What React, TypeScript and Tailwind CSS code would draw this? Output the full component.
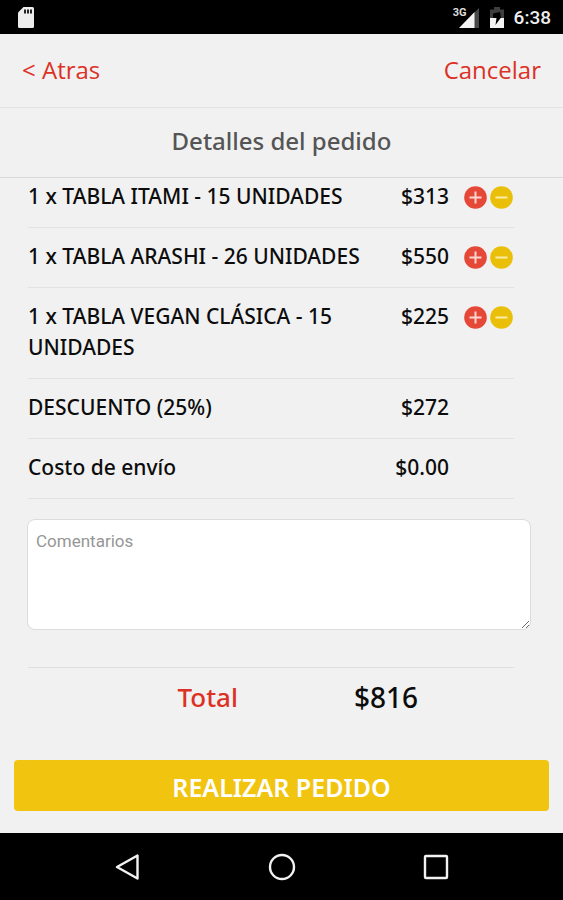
type OrderItem = {
  name: string;
  price: string;
  editable?: boolean;
};

const items: OrderItem[] = [
  { name: '1 x TABLA ITAMI - 15 UNIDADES', price: '$313', editable: true },
  { name: '1 x TABLA ARASHI - 26 UNIDADES', price: '$550', editable: true },
  { name: '1 x TABLA VEGAN CLÁSICA - 15 UNIDADES', price: '$225', editable: true },
  { name: 'DESCUENTO (25%)', price: '$272' },
  { name: 'Costo de envío', price: '$0.00' },
];

function StatusBar() {
  return (
    <div className="h-[34px] pt-px shrink-0 bg-black flex items-center justify-between pl-[18px] pr-3">
      <svg className="w-4 h-[21px]" viewBox="0 0 16 21">
        <path d="M5.5 0H14.5Q16 0 16 1.5V19.500Q16 21 14.500 21H1.500Q0 21 0 19.500V5.500Z" fill="#ececec" />
        <path d="M6 2.500h2v4H6zM9 2.500h2v4H9zM12 2.500h2v4h-2z" fill="#222" />
      </svg>
      <div className="flex items-center">
        <span className="self-start mt-[2px] -mr-2 z-10 text-[11px] leading-[10px] font-bold text-[#dddddd] font-['Roboto']">3G</span>
        <svg className="w-[21px] h-5 mr-[10px]" viewBox="0 0 21 20">
          <path d="M15 5L20 0V20H15Z" fill="#484848" />
          <path d="M0 20L15.500 4V20Z" fill="#f4f4f4" />
        </svg>
        <svg className="w-[14px] h-[21px] mr-[10px]" viewBox="0 0 14 21">
          <path d="M0 2.500H4V0H10V2.500H14V12H0Z" fill="#3e3e3e" />
          <path d="M0 11H14V21H0Z" fill="#f4f4f4" />
          <path d="M10 5L3 6.500V11H6.500L5.500 18L11 10.500Z" fill="#000" />
        </svg>
        <span className="text-[19px] leading-6 font-medium text-[#eeeeee] font-['Roboto']">6:38</span>
      </div>
    </div>
  );
}

function QuantityButtons({ name }: { name: string }) {
  return (
    <div className="flex gap-[3px] mt-[5px]">
      <button type="button" aria-label={`Agregar ${name}`}>
        <svg className="w-[23px] h-[23px]" viewBox="0 0 23 23">
          <circle cx="11.5" cy="11.5" r="11.3" fill="#e54836" />
          <path d="M5.500 11.500H17.500M11.500 5.500V17.500" stroke="#fbd5cf" strokeWidth="2" />
        </svg>
      </button>
      <button type="button" aria-label={`Quitar ${name}`}>
        <svg className="w-[23px] h-[23px]" viewBox="0 0 23 23">
          <circle cx="11.5" cy="11.5" r="11.3" fill="#e9bf09" />
          <path d="M5.500 11.500H17.500" stroke="#fbeca8" strokeWidth="2" />
        </svg>
      </button>
    </div>
  );
}

function NavigationBar() {
  return (
    <nav className="h-[67px] shrink-0 mt-auto bg-black flex items-center justify-between px-[113px]">
      <button type="button" aria-label="Volver">
        <svg className="w-7 h-7" viewBox="0 0 28 28" fill="none" stroke="#f2f2f2" strokeWidth="2.4" strokeLinejoin="round">
          <path d="M24.500 2.500V25.500L4 14Z" />
        </svg>
      </button>
      <button type="button" aria-label="Inicio">
        <svg className="w-7 h-7" viewBox="0 0 28 28" fill="none" stroke="#f2f2f2" strokeWidth="2.4">
          <circle cx="14" cy="14" r="12" />
        </svg>
      </button>
      <button type="button" aria-label="Recientes">
        <svg className="w-7 h-7" viewBox="0 0 28 28" fill="none" stroke="#f2f2f2" strokeWidth="2.4" strokeLinejoin="round">
          <rect x="3" y="3" width="22" height="22" rx="1" />
        </svg>
      </button>
    </nav>
  );
}

export default function App() {
  return (
    <div className="min-h-screen flex flex-col bg-[#f1f1f1] text-[#0c0c0c] font-['Noto_Sans',sans-serif]">
      <StatusBar />

      <header className="h-[74px] pb-[2px] flex items-center justify-between px-[22px] border-b border-[#e2e2e2] text-2xl text-[#dc3226] font-['Open_Sans',sans-serif]">
        <button type="button">&lt; Atras</button>
        <button type="button">Cancelar</button>
      </header>

      <h1 className="h-[70px] pb-1 flex items-center justify-center border-b border-[#dadada] text-2xl font-medium text-[#555555]">
        Detalles del pedido
      </h1>

      <main className="flex flex-col">
        <ul className="ml-7 mr-[49px] text-[21px] leading-[31px] font-medium">
          {items.map((item) => (
            <li key={item.name} className="flex pt-[13px] pb-[15px] first:pt-[3px] border-b border-[#e2e2e2]">
              <span className="flex-1">{item.name}</span>
              <span className="w-[72px] text-right">{item.price}</span>
              <div className="w-[65px] pl-[15px]">
                {item.editable && <QuantityButtons name={item.name} />}
              </div>
            </li>
          ))}
        </ul>

        <textarea
          aria-label="Comentarios"
          placeholder="Comentarios"
          className="mt-5 ml-[27px] mr-8 h-[111px] px-2 py-[9px] rounded-lg border border-[#dcdcdc] bg-white text-[17px] leading-6 font-['Roboto'] placeholder:text-[#969696]"
        />

        {/* Total */}
        <div className="mt-[37px] ml-7 mr-[49px] pt-[11px] flex border-t border-[#dfdfdf] leading-9 font-medium">
          <span className="w-[210px] text-right text-[26px] text-[#dc3226]">Total</span>
          <span className="w-[180px] text-right text-[28px]">$816</span>
        </div>

        <button
          type="button"
          className="mt-[45px] mb-[22px] mx-[14px] h-[51px] pt-1 rounded bg-[#f1c40f] text-white text-[25px] font-semibold"
        >
          REALIZAR PEDIDO
        </button>
      </main>

      <NavigationBar />
    </div>
  );
}
